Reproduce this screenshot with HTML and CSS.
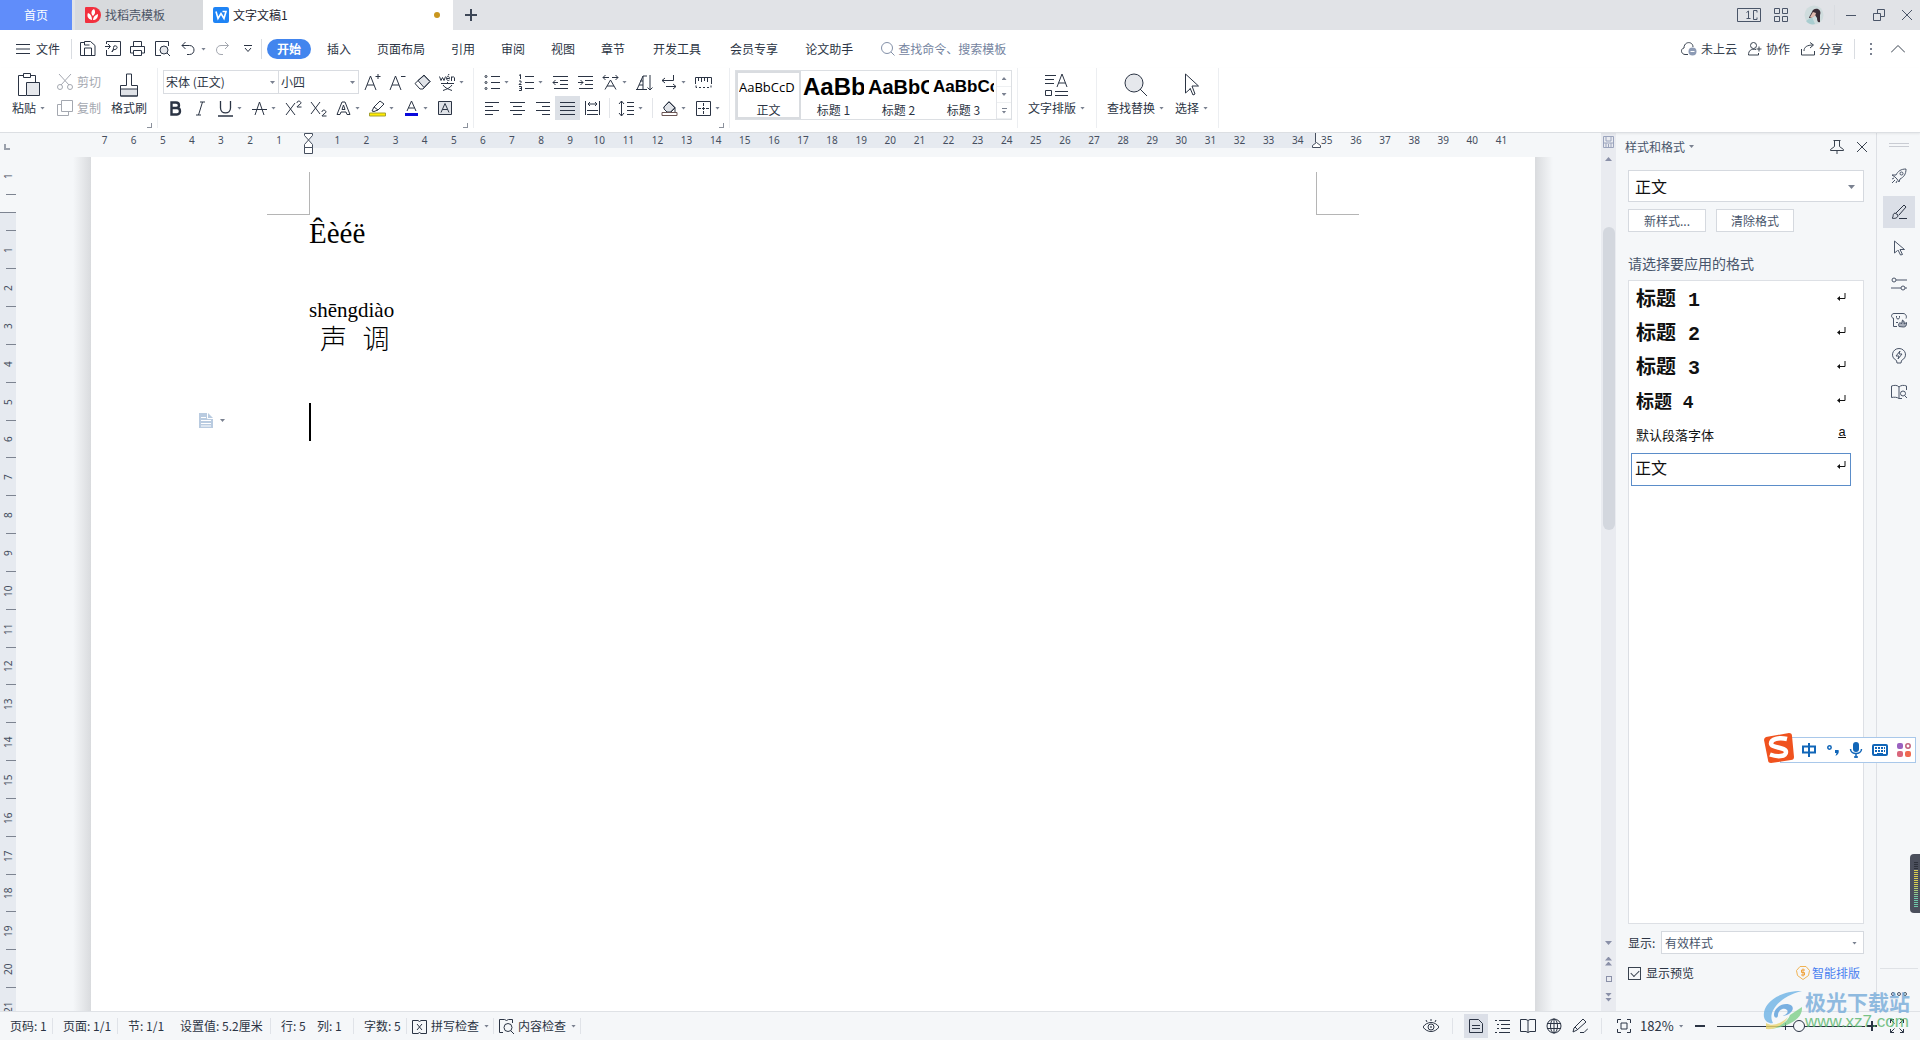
FILE: index.html
```html
<!DOCTYPE html>
<html lang="zh-CN">
<head>
<meta charset="utf-8">
<title>文字文稿1</title>
<link rel="stylesheet" href="styles.css">
</head>
<body>
<div class="app">
  <header class="tabbar">
    <button class="tab tab-home">首页</button>
    <button class="tab tab-docer">
      <svg class="solid" width="16" height="16" viewBox="0 0 16 16"><path d="M1 0h7a8 8 0 0 1 0 16H1a1 1 0 0 1-1-1V1a1 1 0 0 1 1-1z" fill="#f2303e"/><path d="M7 13C2 12 2 8 3 6c3 1 4 4 4 7zM8 9C5 6 7 3 9 2c2 3 1 5-1 7zM8 13c0-3 2-5 5-6 0 4-2 6-5 6z" fill="#fff"/></svg>
      找稻壳模板
    </button>
    <button class="tab tab-doc">
      <svg class="solid" width="16" height="16" viewBox="0 0 16 16"><rect width="16" height="16" rx="2" fill="#1f84f5"/><path d="M3 4.500l2 7 3-5 3 5 2-7h-3.500" fill="none" stroke="#fff" stroke-width="1.600"/></svg>
      文字文稿1<i class="dirty"></i>
    </button>
    <button class="tab-add" aria-label="新建"><svg width="12" height="12" viewBox="0 0 12 12"><path d="M6 0v12M0 6h12" stroke="#3d4757" stroke-width="2"/></svg></button>
    <div class="win">
      <button aria-label="窗口"><svg width="24" height="14" viewBox="0 0 24 14"><path d="M.5.500h23v13H.500zM20 2.500h-3.500v9H20M20 2.500v2M20 9.500v2M11.500 3v7.500M9.500 10.500h4M11.500 3l-2 1.500"/></svg></button>
      <button aria-label="应用"><svg width="14" height="14" viewBox="0 0 14 14"><path d="M.5.500h5v5h-5zM8.500.500h5v5h-5zM.5 8.500h5v5h-5zM8.500 8.500h5v5h-5z"/></svg></button>
      <button aria-label="账号"><svg class="solid" width="20" height="20" viewBox="0 0 20 20"><circle cx="10" cy="10" r="9.500" fill="#cfdcdd"/><path d="M2 16c2-1 3-3 6-4l3 7c-3 1-7 0-9-3z" fill="#a9cdd0"/><path d="M9 5c4-3 9 0 7 5v7c-2 1-3-1-3-4l-2-3-4 3-2 0c1-3 2-4 4-8z" fill="#3a2c35"/><path d="M9 7l3 1-1 3-4 2-1-1z" fill="#e0b9ad"/></svg></button>
      <i class="vline"></i>
      <button aria-label="最小化"><svg width="12" height="12" viewBox="0 0 12 12"><path d="M1 6.500h10"/></svg></button>
      <button aria-label="还原"><svg width="12" height="12" viewBox="0 0 12 12"><path d="M.5 4.500h7v7h-7zM4.500 4.500v-4h7v7h-4"/></svg></button>
      <button aria-label="关闭"><svg width="12" height="12" viewBox="0 0 12 12"><path d="M1 1l10 10M11 1L1 11"/></svg></button>
    </div>
  </header>

  <nav class="menubar">
    <button class="file"><svg width="14" height="10" viewBox="0 0 14 10"><path d="M0 .5h14M0 5h14M0 9.500h14"/></svg>文件</button>
    <i class="vline"></i>
    <div class="quick">
      <button aria-label="保存"><svg width="16" height="16" viewBox="0 0 16 16"><path d="M.5 1.500h4v-1h6l4.500 4v10H.500v-13M4.500 14v-7h7v7M4.500 1v3h5"/></svg></button>
      <button aria-label="输出PDF"><svg width="16" height="16" viewBox="0 0 16 16"><path d="M1.500 3V.5h14v14h-14V9M0 5.500h5M3 3l2.500 2.500L3 8M7 11c2-2 1-4 2-6 4-1 4 3 1 3.500-2 0-3 1-3 2.500"/></svg></button>
      <button aria-label="打印"><svg width="16" height="16" viewBox="0 0 16 16"><path d="M3.500 5.500v-5h8v5M3.500 12h-3V5.500h14V12h-3M3.500 9.500h8v5h-8z"/></svg></button>
      <button aria-label="预览"><svg width="16" height="16" viewBox="0 0 16 16"><path d="M6 14.500H.500V.5h13V5M12 12l3 3"/><circle cx="9" cy="9" r="4" fill="#e6e8ec"/></svg></button>
      <button aria-label="撤销"><svg width="16" height="16" viewBox="0 0 16 16"><path d="M5.500 1L2 4.500 5.500 8M2 4.500h7.500c6 0 6 9 0 9H7"/></svg></button>
      <i class="caret"></i>
      <button class="dim" aria-label="恢复"><svg width="16" height="16" viewBox="0 0 16 16"><path d="M10 1l3.500 3.500L10 8M13.500 4.500H6c-6 0-6 9 0 9h2"/></svg></button>
      <button aria-label="更多"><svg width="8" height="8" viewBox="0 0 8 8"><path d="M0 .5h8M1 3l3 3.500L7 3"/></svg></button>
    </div>
    <i class="vline"></i>
    <div class="menu-tabs">
      <button class="on">开始</button><button>插入</button><button>页面布局</button><button>引用</button><button>审阅</button><button>视图</button><button>章节</button><button class="wide">开发工具</button><button class="wide">会员专享</button><button>论文助手</button>
    </div>
    <label class="search"><svg width="14" height="14" viewBox="0 0 14 14"><circle cx="6" cy="6" r="5.500"/><path d="M10 10l3.500 3.500"/></svg><input type="text" placeholder="查找命令、搜索模板" aria-label="查找命令"></label>
    <div class="share">
      <button><svg width="16" height="14" viewBox="0 0 16 14"><path d="M7 12.500H4C-.5 12-.5 6.500 3 6 3-1 12-1 12 5"/><circle cx="11.500" cy="9.500" r="4" fill="#8d9bb5" stroke="none"/><path d="M9.500 9.500h4" stroke="#fff"/></svg>未上云</button>
      <button><svg width="14" height="14" viewBox="0 0 14 14"><circle cx="5.500" cy="3.500" r="3"/><path d="M8 7.500c-5-1-7.500 1-7.500 5.500h10v-2M11 4.500v5M8.500 7h5"/></svg>协作</button>
      <button><svg width="14" height="14" viewBox="0 0 14 14"><path d="M.5 7v6h13V9M3 9c0-4 3-6 9-6M9 .5L12.500 3 9 6"/></svg>分享</button>
      <i class="vline"></i>
      <button aria-label="更多"><svg width="4" height="12" viewBox="0 0 4 12"><path d="M1 1h2M1 6h2M1 11h2" stroke="#7a8190" stroke-width="2"/></svg></button>
      <button aria-label="收起"><svg width="14" height="8" viewBox="0 0 14 8"><path d="M0 7.500l7-7 7 7"/></svg></button>
    </div>
  </nav>

  <section class="ribbon">
    <div class="group g-clip">
      <button class="big"><svg width="22" height="24" viewBox="0 0 22 24"><path d="M5 2.500H.500v20H8M13 2.500h4.500V9M5.500.5h7v4h-7z"/><path d="M8.500 9.500h13v13h-13z" fill="#e6e8ec"/></svg><span>粘贴<i class="caret"></i></span></button>
      <div class="stack dim">
        <button><svg width="16" height="16" viewBox="0 0 16 16"><path d="M2 0l10 11M14 0L4 11"/><circle cx="3" cy="13" r="2.500"/><circle cx="13" cy="13" r="2.500"/></svg>剪切</button>
        <button><svg width="16" height="16" viewBox="0 0 16 16"><path d="M4.500.5h11v11h-11zM4 4.500H.500v11h11V12"/></svg>复制</button>
      </div>
      <button class="big"><svg width="18" height="24" viewBox="0 0 18 24"><path d="M.5 16h17v7H.500z" fill="#e0e3e8"/><path d="M.5 23V12.500h6V1h5v11.500h6V23z"/></svg><span>格式刷</span></button>
      <i class="corner"></i>
    </div>

    <div class="group g-font">
      <div class="line">
        <div class="fonts"><span class="pick p-font"><select aria-label="字体"><option>宋体 (正文)</option></select></span><span class="pick p-size"><select aria-label="字号"><option>小四</option></select></span></div>
        <button class="ib" aria-label="增大字号"><svg viewBox="0 0 17 17"><path d="M1 16L6.500 2 12 16M3 11h7M14 0v5M11.500 2.500h5"/></svg></button>
        <button class="ib" aria-label="减小字号"><svg viewBox="0 0 17 17"><path d="M1 16L6.500 2 12 16M3 11h7M12 2.500h4.500"/></svg></button>
        <button class="ib" aria-label="清除格式"><svg viewBox="0 0 17 17"><path d="M4 6.500l6-5L16 7.500l-6 6-6-7z" fill="#e0e3e8"/><path d="M1 9.500l9-8.500 6 6.500-7 7.500H6z"/></svg></button>
        <button class="ib more" aria-label="拼音指南"><svg viewBox="0 0 17 17"><path d="M.5 2.500l1.500 4 1.500-3 1.500 3 1.500-4M7.500 4.500h3c0-3-3-3-3 0 0 2 2 2.500 3 1.500M12.500 7V2.500M12.500 4c1-2 3-1 3 0v3M9 1l1.500-1M2 9.500h13M8.500 8v2M4 11c2 3 5 4 9 5.500M13 11c-2 3-5 4-9 5.500"/></svg><i class="caret"></i></button>
      </div>
      <div class="line">
        <button class="ib" aria-label="加粗"><svg viewBox="0 0 17 17"><path d="M4.500 2.500h4.500c4 0 4 5.500 0 5.500H4.500zM4.500 8H10c4 0 4 6.500 0 6.500H4.500z" stroke-width="2.400"/></svg></button>
        <button class="ib" aria-label="倾斜"><svg viewBox="0 0 17 17"><path d="M8 2h5M4 15h5M10.500 2L6.500 15"/></svg></button>
        <button class="ib more" aria-label="下划线"><svg viewBox="0 0 17 17"><path d="M3.500 1v7c0 6.500 10 6.500 10 0V1M1 16h15" stroke-width="1.300"/></svg><i class="caret"></i></button>
        <button class="ib more" aria-label="删除线"><svg viewBox="0 0 17 17"><path d="M4 15L8.500 2 13 15M1 9.500h15"/></svg><i class="caret"></i></button>
        <button class="ib" aria-label="上标"><svg viewBox="0 0 17 17"><path d="M1 3l9 12M10 3L1 15M12 3c0-3 4-2 4 0 0 1-4 3-4 4h4.500"/></svg></button>
        <button class="ib" aria-label="下标"><svg viewBox="0 0 17 17"><path d="M1 2l9 12M10 2L1 14M12 12c0-3 4-2 4 0 0 1-4 3-4 4h4.500"/></svg></button>
        <button class="ib more" aria-label="文字效果"><svg viewBox="0 0 17 17"><path d="M2 14.500L7 2h3l5 12.500h-3L11 12H6l-1 2.500zM7 9.500L8.500 5 10 9.500z"/></svg><i class="caret"></i></button>
        <button class="ib more" aria-label="突出显示"><svg viewBox="0 0 17 17"><path d="M.5 13h16v3H.500z" fill="#ffeb00" stroke="#a6a130"/><path d="M3 11l2-4 6-6 4 3-6 6-4 1.500zM5 7l4 3"/></svg><i class="caret"></i></button>
        <button class="ib more" aria-label="字体颜色"><svg viewBox="0 0 17 17"><path d="M4 11L8.500 1 13 11M5.500 8h6"/><path d="M2 14.500h13" stroke="#0a0adc" stroke-width="3"/></svg><i class="caret"></i></button>
        <button class="ib" aria-label="字符底纹"><svg viewBox="0 0 17 17"><path d="M1.500 1.500h13v13h-13z" fill="#e0e3e8"/><path d="M4 12.500L8 3.500l4 9M5.500 9.500h5"/></svg></button>
      </div>
      <i class="corner"></i>
    </div>

    <div class="group g-para">
      <div class="line">
        <button class="ib more" aria-label="项目符号"><svg viewBox="0 0 17 17"><path d="M7 2.500h9M7 8.500h9M7 14.500h9"/><circle cx="2" cy="2.500" r="1"/><circle cx="2" cy="8.500" r="1"/><circle cx="2" cy="14.500" r="1"/></svg><i class="caret"></i></button>
        <button class="ib more" aria-label="编号"><svg viewBox="0 0 17 17"><path d="M7 2.500h9M7 8.500h9M7 14.500h9M1 1.500l1.500-1V5M1 7h2v1.500L1 10.500h2.500M1 12.500h2.500v4H1M1.500 14.500h2"/></svg><i class="caret"></i></button>
        <button class="ib" aria-label="减少缩进"><svg viewBox="0 0 17 17"><path d="M1 2.500h15M8 6.500h8M8 10.500h8M2 14.500h14M6 8.500H1M3.500 6L1 8.500 3.500 11"/></svg></button>
        <button class="ib" aria-label="增加缩进"><svg viewBox="0 0 17 17"><path d="M1 2.500h15M8 6.500h8M8 10.500h8M2 14.500h14M1 8.500h5M3.500 6L6 8.500 3.500 11"/></svg></button>
        <button class="ib more" aria-label="中文版式"><svg viewBox="0 0 17 17"><path d="M3 15.500L8.500 6l5.500 9.500M5 12h7M7 3.500H1M3.500 1L1 3.500 3.500 6M10 3.500h6M13.500 1L16 3.500 13.500 6"/></svg><i class="caret"></i></button>
        <button class="ib" aria-label="排序"><svg viewBox="0 0 17 17"><path d="M1 15.500L7 2v13.500M3 11h4M4 7h3M0 15.500h11M11 2H7M14 1v15M11.500 13.500L14 16l2.500-2.500"/></svg></button>
        <button class="ib more" aria-label="段落标记"><svg viewBox="0 0 17 17"><path d="M12.500 1v5.500H1M4 4L1 6.500 4 9M5 12.500h10M12 10l3 2.500-3 2.500"/></svg><i class="caret"></i></button>
        <button class="ib" aria-label="标尺"><svg viewBox="0 0 17 17"><path d="M.5 9V3.500h16V9M.5 9v1M16.500 9v1M3.500 4v3M6.500 4v4M9.500 4v3M12.500 4v4M2 13.500H1v-2M4 13.500h2M8 13.500h2M12 13.500h2M16 13.500v-2"/></svg></button>
      </div>
      <div class="line">
        <button class="ib" aria-label="左对齐"><svg viewBox="0 0 17 17"><path d="M1 2.500h14M1 6.500h8M1 10.500h14M1 14.500h8"/></svg></button>
        <button class="ib" aria-label="居中"><svg viewBox="0 0 17 17"><path d="M1 2.500h15M4 6.500h9M1 10.500h15M4 14.500h9"/></svg></button>
        <button class="ib" aria-label="右对齐"><svg viewBox="0 0 17 17"><path d="M2 2.500h14M8 6.500h8M2 10.500h14M8 14.500h8"/></svg></button>
        <button class="ib on" aria-label="两端对齐"><svg viewBox="0 0 17 17"><path d="M1 2.500h15M1 6.500h15M1 10.500h15M1 14.500h15"/></svg></button>
        <button class="ib" aria-label="分散对齐"><svg viewBox="0 0 17 17"><path d="M1.500 1v14M15.500 1v14M4 4h9M6 2L4 4l2 2M11 2l2 2-2 2M3 10.500h11M3 14.500h11"/></svg></button>
        <i class="sep"></i>
        <button class="ib more" aria-label="行距"><svg viewBox="0 0 17 17"><path d="M3.500 1v15M1 4l2.500-3L6 4M1 13l2.500 3L6 13M9 2.500h7M9 6.500h7M9 10.500h7M9 14.500h7"/></svg><i class="caret"></i></button>
        <i class="sep"></i>
        <button class="ib more" aria-label="底纹颜色"><svg viewBox="0 0 17 17"><path d="M3 7l5-5 6 6-4 4H6L3 9z" fill="#e0e3e8"/><path d="M2.500 7.500L8 1.500l6 6-4 4M14 8v4"/><path d="M1 12.500h15v3H1z" stroke="#6b5554"/></svg><i class="caret"></i></button>
        <button class="ib more" aria-label="边框"><svg viewBox="0 0 17 17"><path d="M1.500 1.500h14v14h-14z"/><path d="M8.500 3v11M3 8.500h11" stroke-dasharray="3 1"/></svg><i class="caret"></i></button>
      </div>
      <i class="corner"></i>
    </div>

    <div class="group g-styles">
      <div class="gallery">
        <button class="cell on"><b class="s0">AaBbCcD</b><span>正文</span></button>
        <button class="cell"><b class="s1">AaBb</b><span>标题 1</span></button>
        <button class="cell"><b class="s2">AaBbC</b><span>标题 2</span></button>
        <button class="cell"><b class="s3">AaBbCc</b><span>标题 3</span></button>
        <div class="spin"><button aria-label="上一行"><i class="caret up"></i></button><button aria-label="下一行"><i class="caret"></i></button><button aria-label="展开"><i class="bar"></i><i class="caret"></i></button></div>
      </div>
    </div>
    <div class="group g-layout">
      <button class="big"><svg width="24" height="24" viewBox="0 0 24 24"><path d="M0 2.500h11M0 6.500h9M0 10.500h9M10 18.500h13M10 22.500h13M.5 17.500h6v5h-6zM12 14L17 1l5 13M13.500 10h7"/></svg><span>文字排版<i class="caret"></i></span></button>
    </div>
    <div class="group g-find">
      <button class="big"><svg width="24" height="24" viewBox="0 0 24 24"><circle cx="10" cy="10" r="9" fill="#e6e8ec"/><path d="M16 16l7 7"/></svg><span>查找替换<i class="caret"></i></span></button>
      <button class="big"><svg width="18" height="24" viewBox="0 0 18 24"><path d="M2.500 1v19l4.500-4M9 13l3 8-2 1-3-7M2.500 1l13 12H9" /></svg><span>选择<i class="caret"></i></span></button>
    </div>
  </section>

  <main class="work">
    <section class="doc">
      <div class="hruler">
        <i class="tabstop"></i>
        <div class="band"></div>
        <div class="nums"><span>7</span><span>6</span><span>5</span><span>4</span><span>3</span><span>2</span><span>1</span><span></span><span>1</span><span>2</span><span>3</span><span>4</span><span>5</span><span>6</span><span>7</span><span>8</span><span>9</span><span>10</span><span>11</span><span>12</span><span>13</span><span>14</span><span>15</span><span>16</span><span>17</span><span>18</span><span>19</span><span>20</span><span>21</span><span>22</span><span>23</span><span>24</span><span>25</span><span>26</span><span>27</span><span>28</span><span>29</span><span>30</span><span>31</span><span>32</span><span>33</span><span>34</span><span>35</span><span>36</span><span>37</span><span>38</span><span>39</span><span>40</span><span>41</span></div>
        <svg class="indent-l" width="9" height="22" viewBox="0 0 9 22"><path d="M.5.500h8v2l-4 4.500-4-4.500zM4.500 7l4 4.500v3h-8v-3zM.5 14.500h8v6h-8z"/></svg>
        <svg class="indent-r" width="9" height="15" viewBox="0 0 9 15"><path d="M3.500 0v9.500M4.500 9.500l4 3v2h-8v-2z"/></svg>
      </div>
      <div class="docrow">
        <div class="vruler">
          <span>1</span><i class="half edge"></i>
          <div class="vbody"><i class="half"></i><span>1</span><span>2</span><span>3</span><span>4</span><span>5</span><span>6</span><span>7</span><span>8</span><span>9</span><span>10</span><span>11</span><span>12</span><span>13</span><span>14</span><span>15</span><span>16</span><span>17</span><span>18</span><span>19</span><span>20</span><span>21</span></div>
        </div>
        <div class="canvas">
          <i class="shade left"></i>
          <article class="page">
            <div class="crops"><i class="crop-l"></i><i class="crop-r"></i></div>
            <div class="text">
              <p class="vowels">Êèéë</p>
              <p class="pinyin"><span><small>shēng</small>声</span><span><small>diào</small>调</span></p>
              <div class="cursor"></div>
            </div>
            <button class="para-tool" aria-label="段落布局"><svg class="solid" width="14" height="15" viewBox="0 0 14 15"><path d="M0 0h9l5 5v10H0z" fill="#b9cbe0"/><path d="M2 4.500h5M2 7.500h10M2 10.500h10M2 13h10M8.500 0v5.500H14" stroke="#fff"/></svg><i class="caret"></i></button>
          </article>
          <i class="shade right"></i>
        </div>
      </div>
    </section>

    <div class="scroll">
      <svg width="12" height="13" viewBox="0 0 12 13"><path d="M.5.500h10v11H.500zM.5 7h10M3 1v4h5V1M3 7v4M5.500 8v3M8 7v4" stroke="#9ba4bd"/></svg>
      <button aria-label="向上"><i class="caret up"></i></button>
      <div class="track"><div class="thumb"></div></div>
      <button aria-label="向下"><i class="caret"></i></button>
      <button aria-label="上一页"><i class="caret up"></i><i class="caret up"></i></button>
      <button aria-label="选择对象"><i class="sq"></i></button>
      <button aria-label="下一页"><i class="caret"></i><i class="caret"></i></button>
    </div>

    <aside class="panel">
      <div class="p-head"><button class="p-title">样式和格式<i class="caret"></i></button>
        <button class="p-pin" aria-label="固定"><svg width="14" height="14" viewBox="0 0 14 14"><path d="M3.500.5h7M4.500.500v6L.5 9.500v1h13v-1l-4-3v-6M7 10.500V14"/></svg></button>
        <button aria-label="关闭"><svg width="12" height="12" viewBox="0 0 12 12"><path d="M1 1l10 10M11 1L1 11"/></svg></button></div>
      <span class="pick p-style"><select aria-label="当前样式"><option>正文</option></select></span>
      <div class="p-btns"><button>新样式...</button><button>清除格式</button></div>
      <h2>请选择要应用的格式</h2>
      <ul class="styles">
        <li class="t1">标题 1<svg width="10" height="9" viewBox="0 0 10 9"><path d="M4 3L1 5.500 4 8z" fill="#111" stroke="none"/><path d="M9 0v5.500H2"/></svg></li>
        <li class="t2">标题 2<svg width="10" height="9" viewBox="0 0 10 9"><path d="M4 3L1 5.500 4 8z" fill="#111" stroke="none"/><path d="M9 0v5.500H2"/></svg></li>
        <li class="t3">标题 3<svg width="10" height="9" viewBox="0 0 10 9"><path d="M4 3L1 5.500 4 8z" fill="#111" stroke="none"/><path d="M9 0v5.500H2"/></svg></li>
        <li class="t4">标题 4<svg width="10" height="9" viewBox="0 0 10 9"><path d="M4 3L1 5.500 4 8z" fill="#111" stroke="none"/><path d="M9 0v5.500H2"/></svg></li>
        <li class="df">默认段落字体<u>a</u></li>
        <li class="bd">正文<svg width="10" height="9" viewBox="0 0 10 9"><path d="M4 3L1 5.500 4 8z" fill="#111" stroke="none"/><path d="M9 0v5.500H2"/></svg></li>
      </ul>
      <div class="p-show"><label for="show">显示:</label><span class="pick p-filter"><select id="show"><option>有效样式</option></select></span></div>
      <div class="p-foot"><label><input type="checkbox" checked>显示预览</label>
        <a href="#"><svg width="14" height="14" viewBox="0 0 14 14"><path d="M4 .5h6l3.500 4-1 5L7 13.500 1.500 9.500l-1-5z" stroke="#f0b354"/><path d="M9 4H5.500v2.500h3V9H5M7 2.500v8" stroke="#f0a23c"/></svg>智能排版</a></div>
    </aside>

    <nav class="rail">
      <i class="grip"></i>
      <button aria-label="快捷"><svg viewBox="0 0 16 16"><path d="M5 7c2-4 5-6 10-6 0 5-2 8-6 10l-1 3-2-3-2-2-3-2zM1 15l3-3M1 11l2-1M5 15l1-2"/><circle cx="10.500" cy="5.500" r="1.500"/></svg></button>
      <button class="on" aria-label="样式"><svg viewBox="0 0 16 16"><path d="M1 14c2-1 0-4 3-5l3 2c0 3-3 4-6 3zM5 9l8-8 2 2-7 8M8 14.500h8"/></svg></button>
      <button aria-label="选择"><svg viewBox="0 0 16 16"><path d="M3.500 1v12l3-2.500M3.500 1l10 8.500H9l2.500 5-2 .5-2.500-5"/></svg></button>
      <button aria-label="设置"><svg viewBox="0 0 16 16"><circle cx="3" cy="4" r="2"/><circle cx="12" cy="12" r="2"/><path d="M5 4h11M0 12h10M14 12h2"/></svg></button>
      <button aria-label="素材"><svg viewBox="0 0 16 16"><path d="M3 6.500C-.5 6 0 1.500 3 1.500h9c3 0 4 3 3 5M2.500 6.500v8H6M5.500 4v1.500c0 2 3 2 3 0V4M5 10.500h2"/><path d="M8 14.500c-1-2 0-3 1-4l1.500 1.500 1-4c2 1 2 3 1.500 4l2.500-1.500c.5 3-1 4.500-3 4.500z" fill="#a9afbb"/></svg></button>
      <button aria-label="灵感"><svg viewBox="0 0 16 16"><path d="M5.500 12.500C-1.500 9 1.500 .5 8 .5S17.500 9 10.500 12.500L10 15H6zM9 3L5 8h3l-1 3 4-5H8z"/></svg></button>
      <button aria-label="查阅"><svg viewBox="0 0 16 16"><path d="M8 3v11.500c-2-1.500-5-1.500-7.500-1V2c3-1 6-1 7.500 1 2-2 5-2 7.500-1v4M8 14.500h3"/><circle cx="12" cy="9.500" r="2.500"/><path d="M14 12l2 2"/></svg></button>
      <div class="rail-end"><svg width="16" height="6" viewBox="0 0 16 6"><circle cx="2" cy="3" r="1.500"/><circle cx="8" cy="3" r="1.500"/><circle cx="14" cy="3" r="1.500"/></svg></div>
    </nav>
  </main>

  <footer class="status">
    <span class="w52">页码: 1</span><i class="sep"></i><span class="w64">页面: 1/1</span><i class="sep"></i><span class="w52">节: 1/1</span><span class="w100">设置值: 5.2厘米</span><i class="sep"></i><span class="w36">行: 5</span><span class="w46">列: 1</span><i class="sep"></i><span class="w52">字数: 5</span><i class="sep"></i>
    <button><svg width="15" height="15" viewBox="0 0 15 15"><path d="M7.500 2.500l-1.500-1H.500v13h5.500l1.500-1 1.500 1h5.500v-13H9zM5 5l5 6M10 5l-5 6"/></svg>拼写检查<i class="caret"></i></button><i class="sep"></i>
    <button><svg width="15" height="15" viewBox="0 0 15 15"><path d="M4 13.500H.500v-13h5l2 1 2-1h4V4M12 12l3 3"/><circle cx="9" cy="8.500" r="4"/></svg>内容检查<i class="caret"></i></button><i class="sep"></i>
    <div class="views">
      <button class="eye" aria-label="护眼"><svg viewBox="0 0 16 16"><path d="M0 9c4-6 12-6 16 0-4 6-12 6-16 0zM8 1v2M3 2l1 2M13 2l-1 2"/><circle cx="8" cy="9" r="3"/><circle cx="8" cy="9" r=".5"/></svg></button>
      <i class="sep"></i>
      <button class="vb on" aria-label="页面视图"><svg viewBox="0 0 16 16"><path d="M1.500 1.500h9l4 4v9h-13zM4 7.500h8M4 10.500h8"/></svg></button>
      <button class="vb" aria-label="大纲"><svg viewBox="0 0 16 16"><path d="M5 2.500h11M7 6.500h9M7 10.500h9M5 14.500h11M1 2.500h2M3 6.500h2M3 10.500h2M1 14.500h2"/></svg></button>
      <button class="vb" aria-label="阅读版式"><svg viewBox="0 0 16 16"><path d="M8 2.500v12l-2-1H.500v-12H6zM8 2.500l2-1h5.500v12H10l-2 1"/></svg></button>
      <button class="vb" aria-label="Web版式"><svg viewBox="0 0 16 16"><circle cx="8" cy="8" r="7"/><ellipse cx="8" cy="8" rx="3.500" ry="7"/><path d="M1 5.500h14M1 10.500h14M8 1v14"/></svg></button>
      <button class="vb" aria-label="写作"><svg viewBox="0 0 16 16"><path d="M1 14l1-4 9-9 3 3-9 8-4 2zM3 9l3 3M8 14.500h4l4-4"/></svg></button>
      <i class="sep"></i>
    </div>
    <div class="zoom">
      <button aria-label="适合"><svg width="14" height="14" viewBox="0 0 14 14"><path d="M.5 4V.5H4M10 .500h3.500V4M13.500 10v3.500H10M4 13.500H.500V10M4 4h6v6H4z"/></svg></button>
      <button class="pct">182%<i class="caret"></i></button>
      <button class="minus" aria-label="缩小"><svg width="10" height="10" viewBox="0 0 10 10"><path d="M0 5h10" stroke-width="2"/></svg></button>
      <input type="range" min="0" max="100" value="56" aria-label="显示比例">
      <button aria-label="放大"><svg width="10" height="10" viewBox="0 0 10 10"><path d="M0 5h10M5 0v10" stroke-width="2"/></svg></button>
      <button class="full" aria-label="全屏"><svg width="14" height="14" viewBox="0 0 14 14"><path d="M.5 4V.5H4M.5.500l4 4M10 .500h3.500V4M13.500.500l-4 4M13.500 10v3.500H10M13.500 13.500l-4-4M4 13.500H.500V10M.5 13.500l4-4"/></svg></button>
    </div>
  </footer>

  <div class="ime">
    <svg class="ime-logo solid" width="32" height="32" viewBox="0 0 32 32"><path d="M3 5L26 1q3 0 3 3l2 21q0 3-3 3L8 31q-3 0-3-3L1 8q0-2 2-3z" fill="#f0521e"/><path d="M24 7C16 5 8 7 8 11.500S23 15 23 20 14 25 7 22.500" fill="none" stroke="#fff" stroke-width="4.500"/></svg>
    <svg width="16" height="16" viewBox="0 0 16 16"><path d="M2 4.500h12v6H2zM8 1v14" stroke="#1166b8" stroke-width="2"/></svg>
    <svg width="14" height="14" viewBox="0 0 14 14"><circle cx="3.500" cy="4.500" r="1.700" stroke="#1166b8" stroke-width="1.500"/><path d="M9 7h3.500c1 3-1 5-3 6l1-3H9z" fill="#1166b8" stroke="none"/></svg>
    <svg width="14" height="16" viewBox="0 0 14 16"><rect x="4" y="0" width="6" height="10" rx="3" fill="#1166b8" stroke="none"/><path d="M1.500 7c0 6 11 6 11 0M7 12v4M5 15h4" stroke="#1166b8" stroke-width="1.500"/></svg>
    <svg width="16" height="12" viewBox="0 0 16 12"><rect x="1" y="1" width="14" height="10" rx="1" fill="#fff" stroke="#1166b8" stroke-width="2"/><path d="M3 4h10M3 7h10" stroke="#1166b8" stroke-width="2" stroke-dasharray="2 1"/><path d="M5 9.500h6" stroke="#1166b8"/></svg>
    <svg width="14" height="14" viewBox="0 0 14 14"><rect width="6" height="6" rx="2" fill="#9a62c0" stroke="none"/><circle cx="11" cy="3" r="2.200" stroke="#c0607c" stroke-width="1.500"/><rect y="8" width="6" height="6" rx="2" fill="#d9667c" stroke="none"/><rect x="8" y="8" width="6" height="6" rx="2" fill="#f06a50" stroke="none"/></svg>
  </div>
  <div class="meter"><i></i></div>
  <div class="mark">
    <svg class="solid" width="42" height="42" viewBox="0 0 42 42"><path d="M40 2C14 2 0 16 2 28c1 5 6 7 9 6C5 24 16 8 40 2z" fill="#6db3e6"/><path d="M12 26c0-9 12-14 18-9 3 4-3 10-10 10 4-1 7-4 5-6-3-3-9 0-9 5 0 4-4 3-4 0z" fill="#5b9fdc"/><path d="M40 18c1 12-14 20-32 22 12-4 18-8 20-14z" fill="#7fd08a"/><path d="M4 34c6 4 15 1 22-6-4 8-14 13-22 12z" fill="#e9d56c"/></svg>
    <div><b>极光下载站</b><span>www.xz7.com</span></div>
  </div>
</div>
</body>
</html>
```
FILE: styles.css
```css
* { box-sizing: border-box; }
body { margin: 0; font: 12px/16px "Noto Sans CJK SC", sans-serif; color: #2b3444; background: #f5f7f9; }
button, select, input { font: inherit; color: inherit; border: 0; background: none; padding: 0; margin: 0; white-space: nowrap; }
button { display: flex; align-items: center; }
svg { display: block; flex: none; fill: none; stroke: currentColor; }
svg.solid { stroke: none; }
i { display: block; flex: none; }
p, h2, ul { margin: 0; padding: 0; font-weight: 400; }
.app { display: grid; grid-template-rows: 30px 38px 65px minmax(0, 1fr) 29px; height: 100vh; overflow: hidden; position: relative; }
.caret { width: 5px; height: 3px; background: #7a8190; clip-path: polygon(0 0, 100% 0, 50% 100%); }
.caret.up { clip-path: polygon(50% 0, 100% 100%, 0 100%); }
.vline { width: 1px; height: 20px; background: #d9dce1; }

/* document tabs */
.tabbar { display: flex; background: #e1e3e7; }
.tab { height: 30px; }
.tab-home { width: 72px; justify-content: center; background: #608dfa; color: #fff; margin-right: 3px; }
.tab-docer { width: 128px; padding-left: 10px; gap: 4px; background: #d8dadd; color: #4c5566; }
.tab-doc { width: 250px; padding-left: 10px; gap: 4px; background: #fff; color: #1c2430; }
.dirty { width: 6px; height: 6px; border-radius: 3px; background: #c9961e; margin-left: auto; margin-right: 13px; }
.tab-add { padding-left: 12px; }
.win { margin-left: auto; display: flex; align-items: center; gap: 16px; padding-right: 7px; color: #4a5568; }
.win > :nth-child(1) { margin-right: -3px; }
.win > .vline { margin: 0 -6px; }

/* menu */
.menubar { display: flex; align-items: center; background: #fff; padding-left: 16px; }
.file { gap: 6px; width: 55px; }
.quick { display: flex; align-items: center; width: 189px; padding-left: 8px; gap: 9px; }
.quick .caret { margin-left: -4px; }
.quick .dim { margin-right: 4px; }
.dim { color: #a4a8b0; }
.menu-tabs { display: flex; padding-left: 5px; }
.menu-tabs button { padding: 0 13px; height: 20px; }
.menu-tabs .wide { padding: 0 14px 0 15px; }
.menu-tabs .on { width: 44px; padding: 0; justify-content: center; border-radius: 10px; background: #4285ee; color: #fff; font-weight: 700; margin-right: 3px; }
.search { display: flex; align-items: center; gap: 3px; margin-left: 15px; color: #8390a8; }
.search input { width: 130px; }
.search input::placeholder { color: #7584a0; opacity: 1; }
.share { margin-left: auto; display: flex; align-items: center; gap: 11px; padding-right: 15px; color: #38424f; }
.share button { gap: 4px; }
.share > :nth-child(5) { margin: 0 7px 0 3px; }

/* ribbon */
.ribbon { display: flex; background: #fff; border-bottom: 1px solid #dcdfe3; box-shadow: 0 1px 2px #0001; position: relative; }
.group { position: relative; border-right: 1px solid #eceef1; height: 60px; }
.corner { position: absolute; right: 5px; bottom: 0; width: 5px; height: 5px; border: solid #8b919c; border-width: 0 1px 1px 0; }
.big { flex-direction: column; gap: 3px; padding-top: 5px; height: 56px; }
.big span { display: flex; align-items: center; gap: 4px; }
.g-clip { width: 158px; display: flex; padding-left: 12px; }
.stack { display: flex; flex-direction: column; padding: 6px 10px 0 12px; gap: 10px; }
.stack button { gap: 4px; }
.g-font { width: 316px; padding: 2px 0 0 5px; }
.g-para { width: 256px; padding: 2px 0 0 6px; }
.line { display: flex; align-items: center; height: 24px; margin-bottom: 2px; }
.fonts { display: flex; border: 1px solid #d9dce1; width: 196px; height: 24px; margin-right: 1px; }
.pick { position: relative; display: block; background: #fff; }
.pick select { appearance: none; width: 100%; height: 100%; outline: 0; }
.pick::after { content: ""; position: absolute; right: 6px; top: 50%; margin-top: -1px; width: 5px; height: 3px; background: #7a8190; clip-path: polygon(0 0, 100% 0, 50% 100%); pointer-events: none; }
.p-font { width: 115px; border-right: 1px solid #d9dce1; padding-left: 2px; }
.p-font::after, .p-size::after { right: 3px; }
.p-size { flex: 1; padding-left: 2px; }
.ib { width: 25px; height: 24px; padding-left: 4px; gap: 3px; flex: none; }
.ib svg { width: 17px; height: 17px; }
.ib.more { width: 34px; }
.ib.on { background: #dce0e6; }
.line .sep { width: 1px; height: 20px; background: #e3e5e9; margin: 0 4px; }
.g-styles { width: 288px; padding: 2px 0 0 5px; }
.gallery { display: flex; width: 277px; height: 50px; border: 1px solid #dcdfe3; }
.cell { width: 65px; padding: 0; flex-direction: column; overflow: hidden; align-items: center; }
.cell.on { outline: 2px solid #d9dce0; outline-offset: -2px; }
.cell b { font-family: "Liberation Sans", sans-serif; height: 31px; line-height: 32px; color: #000; width: 61px; overflow: hidden; text-align: left; }
.cell b.s0 { font: 400 13px/32px "Open Sans", sans-serif; width: 59px; }
.cell b.s1 { font-size: 24px; }
.cell b.s2 { font-size: 20px; }
.cell b.s3 { font-size: 17px; }
.spin { flex: 1; border-left: 1px solid #e3e5e9; display: grid; grid-template-rows: 1fr 1fr 1fr; }
.spin button { flex-direction: column; justify-content: center; gap: 2px; border-bottom: 1px solid #eef0f2; }
.bar { width: 5px; height: 1px; background: #7a8190; }
.g-layout { width: 79px; padding-left: 10px; }
.g-find { width: 122px; padding-left: 10px; display: flex; gap: 11px; }

/* document area */
.work { display: flex; min-height: 0; }
.doc { flex: 1; display: flex; flex-direction: column; min-width: 0; }
.hruler { position: relative; height: 24px; flex: none; background: #f5f7f9; font: 10px/14px "Noto Sans", sans-serif; color: #454e5e; }
.tabstop { position: absolute; left: 4px; top: 11px; width: 6px; height: 6px; border: solid #9aa0ab; border-width: 0 0 2px 2px; }
.band { position: absolute; left: 308px; right: 285px; top: 0; height: 15px; background: #e6eaf0; }
.nums { position: relative; margin: 0 85px 0 90px; display: grid; grid-template-columns: repeat(49, minmax(0, 1fr)); text-align: center; }
.indent-l, .indent-r { position: absolute; fill: #fff; top: 0; left: 304px; }
.indent-r { left: auto; right: 280px; }
.docrow { flex: 1; display: flex; min-height: 0; }
.vruler { width: 16px; overflow: hidden; font: 10px/16px "Noto Sans", sans-serif; color: #454e5e; }
.vruler span { display: flex; align-items: center; justify-content: center; height: 38px; writing-mode: vertical-rl; transform: rotate(180deg); background: linear-gradient(#7d8491, #7d8491) 0 0 / 10px 1px no-repeat; }
.half { height: 18px; background: linear-gradient(#7d8491, #7d8491) 100% 100% / 10px 1px no-repeat; }
.half.edge { background-size: 16px 1px; }
.vbody { background: #e6eaf0; display: grid; grid-template-rows: 18px; grid-auto-rows: 38px 38px 38px 38px 38px 37px; }
.vbody span { height: auto; }
.canvas { flex: 1; display: flex; padding: 0 48px 0 57px; }
.shade { width: 18px; background: linear-gradient(90deg, #f5f7f9, #d9dbde); }
.shade.right { background: linear-gradient(270deg, #f5f7f9, #d9dbde); }
.page { flex: 1; background: #fff; position: relative; color: #000; }
.crops { display: flex; justify-content: space-between; padding: 15px 176px 0; }
.crops i { width: 43px; height: 43px; border: solid #b5b5b5; border-width: 0 1px 1px 0; }
.crops .crop-r { border-width: 0 0 1px 1px; }
.text { padding: 2px 218px 0; font-family: "Liberation Serif", serif; }
.vowels { font-size: 29px; line-height: 32px; }
.pinyin { display: flex; margin-top: 50px; font: 300 27px/32px "Noto Sans CJK SC", sans-serif; }
.pinyin span { display: flex; flex-direction: column; align-items: center; }
.pinyin small { font: 21px/23px "Liberation Serif", serif; }
.cursor { width: 2px; height: 38px; margin-top: 49px; background: #000; }
.para-tool { position: absolute; left: 108px; top: 256px; gap: 7px; }

.scroll { width: 15px; display: flex; flex-direction: column; align-items: center; padding: 3px 0 5px; background: #e9ebf0; }
.scroll svg { margin-bottom: 1px; }
.scroll button { height: 18px; flex-direction: column; justify-content: center; gap: 1px; }
.scroll .caret { background: #8a90a8; width: 7px; height: 4px; }
.track { flex: 1; width: 12px; padding-top: 59px; }
.thumb { height: 303px; border-radius: 6px; background: #d3d7de; }
.sq { width: 6px; height: 6px; border: 1px solid #8a90a8; }

/* style pane */
.panel { width: 261px; display: flex; flex-direction: column; padding: 4px 12px 0 12px; border-right: 1px solid #dde0e5; background: #f5f7f9; }
.p-head { display: flex; align-items: center; height: 19px; gap: 12px; margin: 0 -4px 14px -3px; }
.p-head svg { color: #39424f; }
.p-title { gap: 4px; color: #48556b; margin-right: auto; }
.p-style { height: 32px; border: 1px solid #d5d9df; padding-left: 6px; font-size: 16px; color: #111; }
.p-style::after { width: 7px; height: 4px; right: 8px; }
.p-btns { display: flex; gap: 10px; margin-top: 7px; }
.p-btns button { width: 78px; height: 23px; justify-content: center; background: #fff; border: 1px solid #d5d9df; color: #48556b; }
h2 { font-size: 14px; line-height: 20px; margin: 21px 0 7px; color: #48556b; }
.styles { flex: 1; list-style: none; background: #fff; border: 1px solid #dde0e5; padding: 3px 12px 0 2px; color: #111; }
.styles li { display: flex; align-items: center; height: 34px; padding: 0 5px; font-family: "Liberation Mono", "Noto Sans CJK SC", monospace; }
.styles svg, .styles u { margin: 0 0 8px auto; }
.styles .t1, .styles .t2, .styles .t3 { font-size: 20px; font-weight: 700; }
.styles .t4 { font-size: 18px; font-weight: 700; }
.styles .df { font-size: 13px; height: 33px; }
.styles .bd { font-size: 16px; height: 33px; padding: 0 4px 0 3px; border: 1px solid #5b8dc9; }
.p-show { display: flex; justify-content: space-between; align-items: center; margin-top: 7px; }
.p-filter { width: 203px; height: 23px; border: 1px solid #d5d9df; padding-left: 3px; color: #48556b; }
.p-foot { display: flex; justify-content: space-between; padding: 11px 4px 0 0; height: 57px; align-items: flex-start; }
.p-foot label, .p-foot a { display: flex; align-items: center; gap: 5px; }
.p-foot a { color: #4a7ff0; text-decoration: none; gap: 2px; }
.p-foot input { appearance: none; width: 13px; height: 13px; border: 1px solid #39424f; position: relative; }
.p-foot input:checked::after { content: ""; position: absolute; left: 2px; top: 2px; width: 7px; height: 4px; border: solid #39424f; border-width: 0 0 1px 1px; transform: rotate(-45deg); }

.rail { width: 43px; display: flex; flex-direction: column; align-items: center; padding-top: 10px; color: #4a5568; }
.grip { width: 20px; height: 4px; border: solid #c9ccd3; border-width: 1px 0; margin-bottom: 13px; }
.rail button { width: 32px; height: 32px; margin-bottom: 4px; justify-content: center; }
.rail button svg { width: 16px; height: 16px; }
.rail .on { background: #dbdfe7; color: #2b3444; }
.rail-end { margin-top: auto; width: 38px; height: 43px; border-top: 1px solid #dfe2e6; padding: 22px 11px 0; }

/* status bar */
.status { display: flex; align-items: center; border-top: 1px solid #dfe2e6; background: #f5f7f9; white-space: nowrap; }
.status .sep { width: 1px; height: 16px; background: #e0e3e8; }
.status > span { padding-left: 10px; }
.w36 { width: 36px; }
.w46 { width: 46px; }
.w52 { width: 52px; }
.w64 { width: 64px; }
.w100 { width: 100px; }
.status > button { gap: 4px; padding: 0 4px 0 5px; height: 20px; }
.status > button .caret { margin-left: 1px; }
.views { display: flex; align-items: center; margin-left: auto; }
.views svg { width: 16px; height: 16px; }
.eye { margin-right: 13px; }
.views > .sep:nth-child(2) { margin-right: 11px; }
.views > .sep:last-child { margin-left: 7px; }
.vb { width: 24px; height: 24px; justify-content: center; margin-right: 2px; }
.vb.on { background: #dbdfe7; }
.zoom { display: flex; align-items: center; padding: 0 16px 0 15px; }
.pct { gap: 5px; margin: 0 13px 0 9px; width: 42px; font-size: 13px; }
.zoom input { appearance: none; width: 148px; height: 14px; margin: 0 2px 0 12px; background: linear-gradient(#2b3444, #2b3444) 0 50% / 100% 1px no-repeat, linear-gradient(#2b3444, #2b3444) 68px 50% / 1px 7px no-repeat; }
.zoom input::-webkit-slider-thumb { appearance: none; width: 12px; height: 12px; border-radius: 6px; border: 1px solid #2b3444; background: #f5f7f9; }
.full { margin-left: 13px; }

/* floating windows */
.ime { position: absolute; right: 4px; bottom: 277px; height: 26px; display: flex; align-items: center; gap: 9px; padding: 0 4px 0 20px; background: #fff; border: 1px solid #a9c8ea; }
.ime-logo { position: absolute; left: -18px; top: -6px; }
.meter { position: absolute; right: 0; bottom: 127px; width: 10px; height: 59px; padding: 7px 2px 6px 4px; border-radius: 4px 0 0 4px; background: #4b4f5c; }
.meter i { height: 100%; background: repeating-linear-gradient(#4b4f5c 0 1px, #0000 1px 2px), linear-gradient(#2c303a 20%, #d8cf50 20% 50%, #6fc8a8 80%); }
.mark { position: absolute; right: 10px; bottom: 9px; display: flex; align-items: center; gap: 1px; opacity: .8; pointer-events: none; }
.mark b { display: block; font-size: 21px; line-height: 24px; color: #76abd9; }
.mark span { display: block; font: 17px/18px "Liberation Sans", sans-serif; color: #58b56b; }
```
